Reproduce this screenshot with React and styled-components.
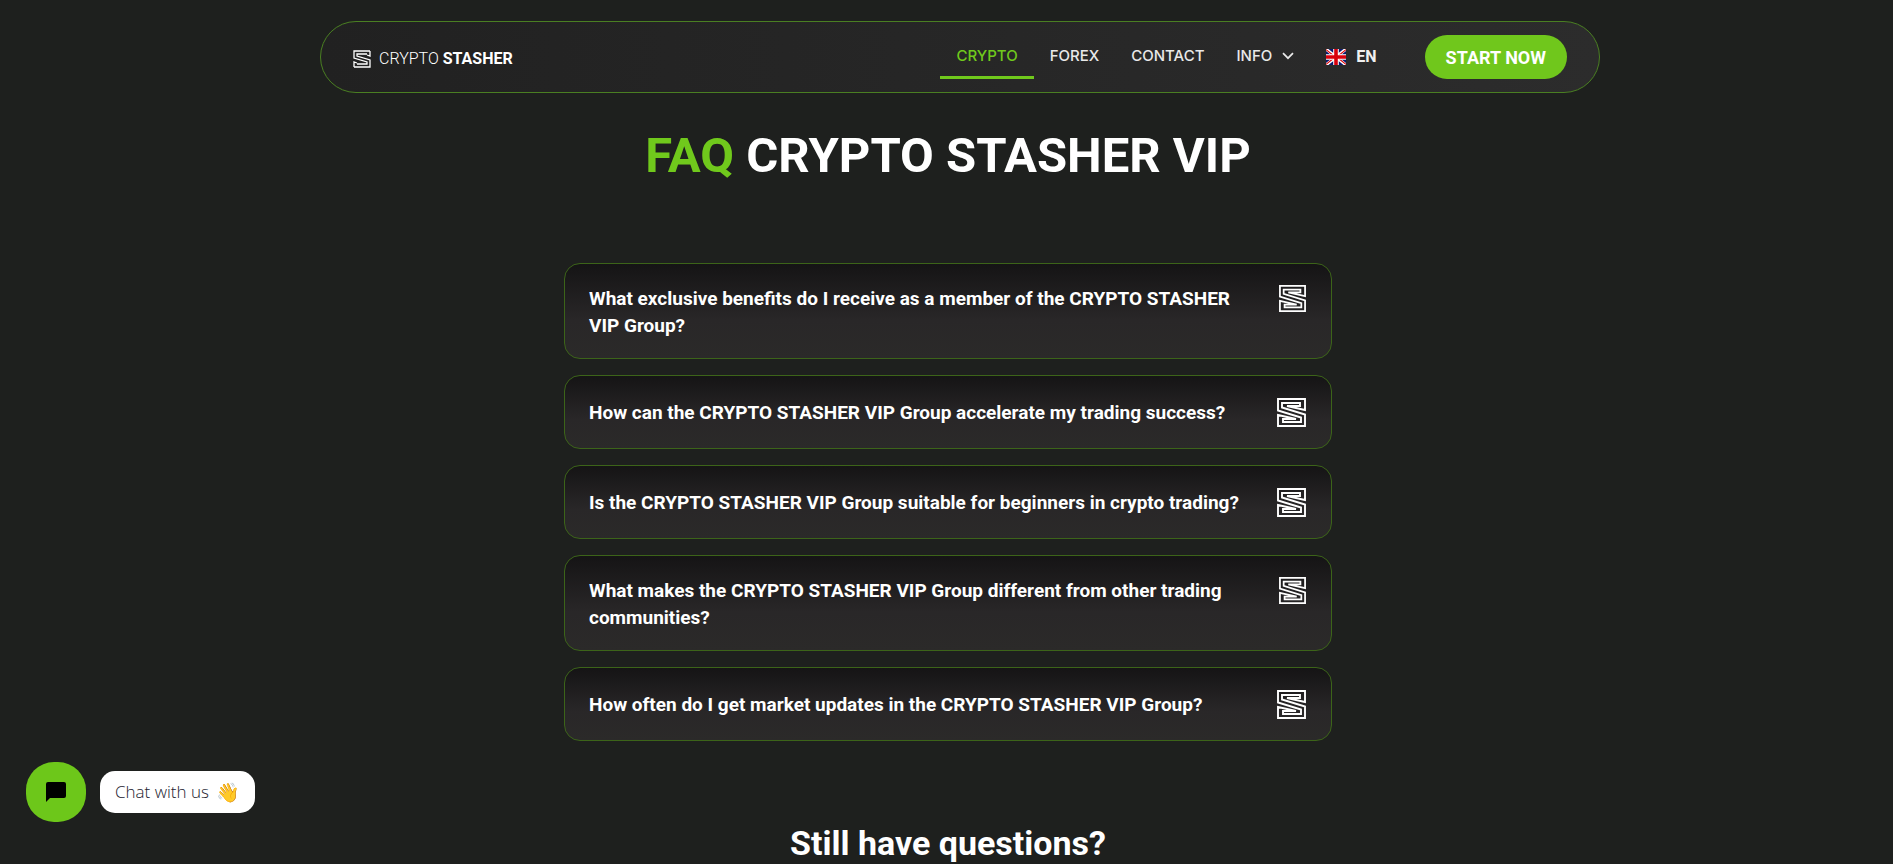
import React from 'react';
import styled, { createGlobalStyle, css } from 'styled-components';

const GlobalStyle = createGlobalStyle`
  * { box-sizing: border-box; }
  html { scrollbar-width: none; }
  body {
    margin: 0;
    background: #1e201e;
    color: #fff;
    font-family: Roboto, "Liberation Sans", sans-serif;
  }
  h1, h2 { margin: 0; font-weight: 700; }
`;

const Page = styled.div`
  padding-top: 21px;
`;

const HeaderWrap = styled.div`
  padding: 0 0 0 27px;
`;

const Header = styled.header`
  display: flex;
  align-items: center;
  justify-content: space-between;
  max-width: 1280px;
  height: 72px;
  margin: 0 auto;
  padding: 0 32px;
  border: 1px solid #4a7f22;
  border-radius: 36px;
  background: linear-gradient(90deg, #212121, #2c2c2c);
`;

const Brand = styled.a`
  display: flex;
  align-items: center;
  gap: 8px;
  padding-top: 4px;
  color: #fff;
  font-size: 16px;
  font-weight: 300;
  line-height: 20px;
  text-decoration: none;
  white-space: nowrap;
  b { font-weight: 700; }
`;

const Right = styled.div`
  display: flex;
  align-items: center;
`;

const Nav = styled.nav`
  display: flex;
`;

const navItem = css`
  display: flex;
  align-items: center;
  gap: 10px;
  height: 44px;
  padding: 0 16px;
  border: 0;
  border-bottom: 3px solid ${(p) => (p.$active ? '#70c91c' : 'transparent')};
  background: none;
  color: ${(p) => (p.$active ? '#70c91c' : '#e9e9e9')};
  font: 500 15px/20px Inter, "Liberation Sans", sans-serif;
  text-decoration: none;
  cursor: pointer;
`;

const NavLink = styled.a`${navItem}`;
const NavButton = styled.button`${navItem}`;

const Language = styled.button`
  display: flex;
  align-items: center;
  gap: 10px;
  padding: 0 16px;
  border: 0;
  background: none;
  color: #f0f0f0;
  font: 700 16px/20px Roboto, "Liberation Sans", sans-serif;
  cursor: pointer;
`;

const StartLink = styled.a`
  display: flex;
  align-items: center;
  height: 44px;
  margin-left: 32px;
  padding: 0 21px;
  border-radius: 22px;
  background: #70c71c;
  color: #fff;
  font-size: 18px;
  font-weight: 700;
  text-decoration: none;
  white-space: nowrap;
`;

const Main = styled.main`
  display: flex;
  flex-direction: column;
  align-items: center;
  padding: 33px 0 0 3px;
`;

const Title = styled.h1`
  font-size: 49px;
  line-height: 60px;
  text-align: center;
  span { color: #70c91c; }
`;

const FaqList = styled.div`
  display: flex;
  flex-direction: column;
  gap: 16px;
  width: 100%;
  max-width: 768px;
  margin-top: 77px;
`;

const Question = styled.button`
  display: flex;
  align-items: center;
  justify-content: space-between;
  gap: 32px;
  width: 100%;
  min-height: 74px;
  padding: 20px 25px 20px 24px;
  border: 1px solid #3c6419;
  border-radius: 16px;
  background: linear-gradient(180deg, #151415, #292728 60%, #2b2a29);
  color: #fff;
  font: 700 19px/27px Roboto, "Liberation Sans", sans-serif;
  text-align: left;
  cursor: pointer;
  svg { flex: none; }
`;

const TallQuestion = styled(Question)`
  align-items: flex-start;
  min-height: 96px;
  padding-top: 21px;
  padding-bottom: 19px;
`;

const Subtitle = styled.h2`
  margin-top: 80px;
  font-size: 34px;
  line-height: 44px;
`;

const Chat = styled.div`
  position: fixed;
  left: 26px;
  bottom: 42px;
  display: flex;
  align-items: center;
  gap: 14px;
`;

const ChatButton = styled.button`
  display: grid;
  place-items: center;
  width: 60px;
  height: 60px;
  padding: 0;
  border: 0;
  border-radius: 28px;
  background: #6dc71a;
  cursor: pointer;
`;

const ChatBubble = styled.div`
  display: flex;
  align-items: center;
  gap: 7px;
  height: 42px;
  padding: 0 15px;
  border-radius: 15px;
  background: #fff;
  color: #22222e;
  font: 300 17px/24px "Open Sans", "Noto Sans", sans-serif;
  white-space: nowrap;
`;

const Emoji = styled.span`
  font-size: 19px;
`;

const Mark = ({ size }) => (
  <svg width={size} height={size} viewBox="0 0 29 29" fill="none" stroke="#fff" strokeWidth="1.9" aria-hidden="true">
    <path d="M28 1H1V12.500L24 19.500V24H6V21H19L1 17V28H28V16.500L5 9.500V5H23V8H10L28 12Z" />
  </svg>
);

const SmallMark = () => (
  <svg width="18" height="18" viewBox="0 0 18 18" fill="none" stroke="#fff" strokeWidth="1.3" aria-hidden="true">
    <path d="M17 1H1V8L14 12V14H4M17 1V6L14 5M1 17H17V10L4 6V4H14M1 17V12L4 13" />
  </svg>
);

const Chevron = () => (
  <svg width="12" height="8" viewBox="0 0 12 8" fill="none" stroke="#e9e9e9" strokeWidth="1.7" aria-hidden="true">
    <path d="M1 1.2L6 6.2L11 1.2" />
  </svg>
);

const Flag = () => (
  <svg width="20" height="16" viewBox="0 0 20 16" aria-hidden="true">
    <path fill="#0a1a6e" d="M0 0H20V16H0Z" />
    <path stroke="#fff" strokeWidth="3" d="M0 0L20 16M20 0L0 16" />
    <path stroke="#d00" strokeWidth="1.2" d="M0 .6L8 7M20 .6L12 7M0 15.4L8 9M20 15.4L12 9" />
    <path stroke="#fff" strokeWidth="5.6" d="M10 0V16M0 8H20" />
    <path stroke="#d8000c" strokeWidth="3.6" d="M10 0V16M0 8H20" />
  </svg>
);

const ChatIcon = () => (
  <svg width="20" height="20" viewBox="0 0 20 20" aria-hidden="true">
    <path d="M2 0H18Q20 0 20 2V14Q20 16 18 16H4L0 20V2Q0 0 2 0Z" />
  </svg>
);

const QUESTIONS = [
  { text: 'What exclusive benefits do I receive as a member of the CRYPTO STASHER VIP Group?', tall: true },
  { text: 'How can the CRYPTO STASHER VIP Group accelerate my trading success?' },
  { text: 'Is the CRYPTO STASHER VIP Group suitable for beginners in crypto trading?' },
  { text: 'What makes the CRYPTO STASHER VIP Group different from other trading communities?', tall: true },
  { text: 'How often do I get market updates in the CRYPTO STASHER VIP Group?' },
];

export default function App() {
  return (
    <Page>
      <GlobalStyle />
      <HeaderWrap>
        <Header>
          <Brand href="#home">
            <SmallMark />
            <span>CRYPTO <b>STASHER</b></span>
          </Brand>
          <Right>
            <Nav>
              <NavLink href="#crypto" $active>CRYPTO</NavLink>
              <NavLink href="#forex">FOREX</NavLink>
              <NavLink href="#contact">CONTACT</NavLink>
              <NavButton type="button">INFO <Chevron /></NavButton>
            </Nav>
            <Language type="button"><Flag /> EN</Language>
            <StartLink href="#start">START NOW</StartLink>
          </Right>
        </Header>
      </HeaderWrap>
      <Main>
        <Title><span>FAQ</span> CRYPTO STASHER VIP</Title>
        <FaqList>
          {QUESTIONS.map(({ text, tall }) => {
            const Item = tall ? TallQuestion : Question;
            return (
              <Item type="button" key={text}>
                <span>{text}</span>
                <Mark size={tall ? 27 : 29} />
              </Item>
            );
          })}
        </FaqList>
        <Subtitle>Still have questions?</Subtitle>
      </Main>
      <Chat>
        <ChatButton type="button" aria-label="Open chat"><ChatIcon /></ChatButton>
        <ChatBubble>Chat with us <Emoji>👋</Emoji></ChatBubble>
      </Chat>
    </Page>
  );
}
